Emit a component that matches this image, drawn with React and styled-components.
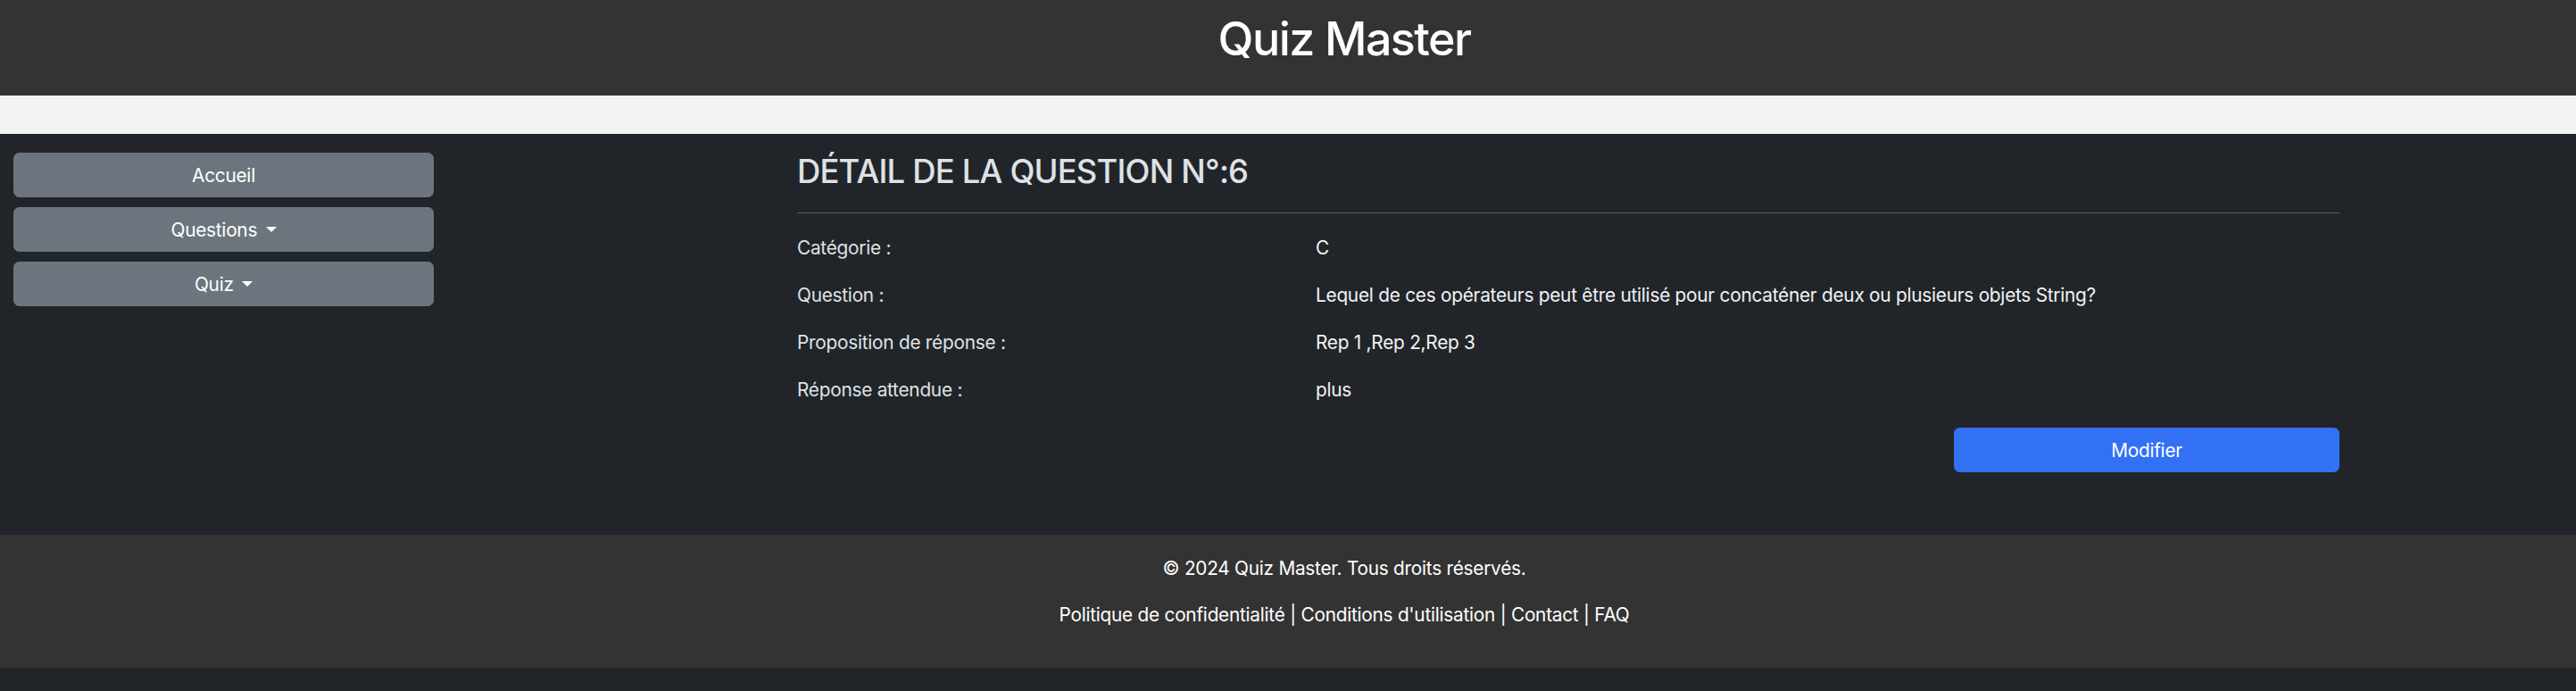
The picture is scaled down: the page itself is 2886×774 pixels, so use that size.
import styled, { createGlobalStyle } from 'styled-components';

const GlobalStyle = createGlobalStyle`
  * { box-sizing: border-box; }
  body {
    margin: 0;
    background: #212529;
    color: #dee2e6;
    font-family: Inter, "Noto Sans", "Liberation Sans", sans-serif;
    font-size: 20.8px;
    line-height: 1.5;
    letter-spacing: -0.012em;
  }
`;

const Header = styled.header`
  background: #333333;
  height: 107px;
  padding: 13px 0 0 126px;
  display: flex;
  justify-content: center;
`;

const Title = styled.h1`
  margin: 0;
  font-size: 52px;
  font-weight: 500;
  line-height: 1.2;
  letter-spacing: -0.03em;
  color: #ffffff;
`;

const Strip = styled.div`
  height: 43px;
  background: #f3f3f3;
`;

const Body = styled.div`
  display: flex;
  align-items: flex-start;
  padding: 21px 0 70px;
`;

const Sidebar = styled.nav`
  width: 486px;
  padding-left: 15px;
  display: flex;
  flex-direction: column;
  gap: 11px;
  flex-shrink: 0;
`;

const SideButton = styled.button`
  height: 50px;
  width: 100%;
  border: 1.3px solid #6c757d;
  border-radius: 6.5px;
  background: #6c757d;
  color: #ffffff;
  font-family: inherit;
  font-size: 20.8px;
  letter-spacing: -0.012em;
  line-height: 1.5;
  padding-top: 2px;
  cursor: pointer;

  ${({ $dropdown }) => $dropdown && `
    &::after {
      content: "";
      display: inline-block;
      margin-left: 0.45em;
      vertical-align: 0.255em;
      border-top: 0.3em solid;
      border-right: 0.3em solid transparent;
      border-left: 0.3em solid transparent;
    }
  `}
`;

const Content = styled.main`
  margin-left: 407px;
  width: 1728px;
`;

const Heading = styled.h3`
  margin: 0;
  font-size: 36.4px;
  font-weight: 500;
  line-height: 1.2;
  letter-spacing: -0.022em;
  color: #dee2e6;
  text-transform: uppercase;
`;

const Rule = styled.hr`
  margin: 23px 0 23px;
  border: 0;
  border-top: 1.3px solid rgba(222, 226, 230, 0.3);
`;

const DetailList = styled.dl`
  margin: 0;
  display: grid;
  grid-template-columns: 581px 1fr;
  row-gap: 22px;
`;

const Label = styled.dt`
  font-weight: 400;
  line-height: 31.2px;
  color: #dee2e6;
`;

const Value = styled.dd`
  margin: 0;
  line-height: 31.2px;
  color: #f1f3f5;
`;

const Actions = styled.div`
  display: flex;
  justify-content: flex-end;
  margin-top: 26px;
`;

const PrimaryButton = styled.button`
  width: 432px;
  height: 50px;
  border: 1.3px solid #3271f4;
  border-radius: 6.5px;
  background: #3271f4;
  color: #ffffff;
  font-family: inherit;
  font-size: 20.8px;
  letter-spacing: -0.012em;
  padding-top: 2px;
  cursor: pointer;
`;

const Footer = styled.footer`
  background: #333333;
  padding: 22px 0 23px 126px;
  text-align: center;
  color: #ffffff;
`;

const FooterLine = styled.p`
  margin: 0 0 21px;
  line-height: 31.2px;
`;

const FooterLink = styled.a`
  color: #ffffff;
  text-decoration: none;
`;

const details = [
  { label: 'Catégorie :', value: 'C' },
  { label: 'Question :', value: 'Lequel de ces opérateurs peut être utilisé pour concaténer deux ou plusieurs objets String?' },
  { label: 'Proposition de réponse :', value: 'Rep 1 ,Rep 2,Rep 3' },
  { label: 'Réponse attendue :', value: 'plus' },
];

const links = ['Politique de confidentialité', "Conditions d'utilisation", 'Contact', 'FAQ'];

export default function App() {
  return (
    <>
      <GlobalStyle />
      <Header>
        <Title>Quiz Master</Title>
      </Header>
      <Strip />
      <Body>
        <Sidebar>
          <SideButton>Accueil</SideButton>
          <SideButton $dropdown>Questions</SideButton>
          <SideButton $dropdown>Quiz</SideButton>
        </Sidebar>
        <Content>
          <Heading>Détail de la question N°:6</Heading>
          <Rule />
          <DetailList>
            {details.map((d) => [
              <Label key={d.label}>{d.label}</Label>,
              <Value key={d.label + '-v'}>{d.value}</Value>,
            ])}
          </DetailList>
          <Actions>
            <PrimaryButton>Modifier</PrimaryButton>
          </Actions>
        </Content>
      </Body>
      <Footer>
        <FooterLine>© 2024 Quiz Master. Tous droits réservés.</FooterLine>
        <FooterLine>
          {links.map((l, i) => (
            <span key={l}>
              {i > 0 && ' | '}
              <FooterLink href="#">{l}</FooterLink>
            </span>
          ))}
        </FooterLine>
      </Footer>
    </>
  );
}
